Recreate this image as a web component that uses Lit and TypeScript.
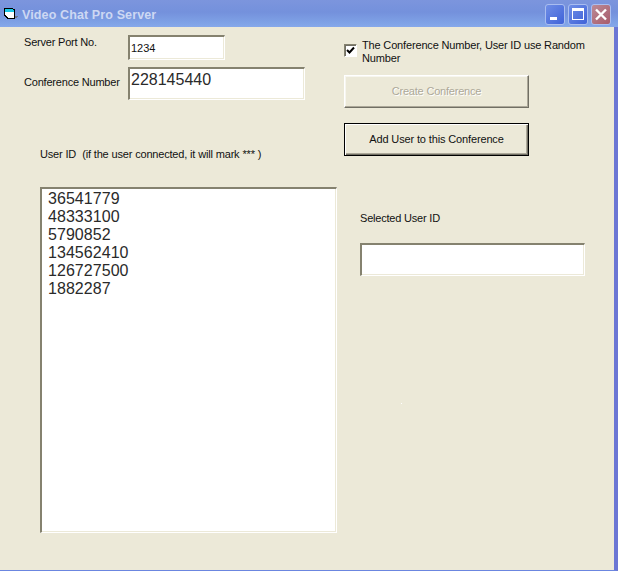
import { LitElement, html, css } from "lit";
import { customElement } from "lit/decorators.js";

@customElement("app-root")
export class AppRoot extends LitElement {
  static styles = css`
    :host {
      display: block;
      width: 618px;
      height: 571px;
      overflow: hidden;
      font-family: "Liberation Sans", Arial, sans-serif;
      font-size: 11px;
      letter-spacing: -0.2px;
      color: #111;
    }
    .window {
      box-sizing: border-box;
      width: 618px;
      height: 571px;
      display: flex;
      flex-direction: column;
      background: #ece9d8;
      border-right: 4px solid #6b76d4;
      border-bottom: 1px solid #6b86e0;
    }
    .titlebar {
      box-sizing: border-box;
      height: 27px;
      margin-right: -4px;
      flex: none;
      display: flex;
      align-items: center;
      padding: 0 4px 0 4px;
      background: linear-gradient(180deg, #7c95dd 0%, #7491dc 45%, #7fa2e6 85%, #86a8ea 100%);
    }
    .app-icon { width: 16px; height: 16px; flex: none; margin: 1px 2px 0 0; }
    .title {
      font-weight: bold;
      font-size: 12.5px;
      letter-spacing: 0.12px;
      color: #cdd8f3;
      flex: 1;
      padding-top: 2px;
    }
    .caps { display: flex; gap: 3px; margin-right: 3px; margin-top: 1px; }
    .cap {
      box-sizing: border-box;
      width: 20px;
      height: 21px;
      border: 1px solid #a9bdf0;
      border-radius: 3px;
      background: linear-gradient(135deg, #6f8ee6, #3f62d8);
      display: block;
    }
    .cap.close { background: linear-gradient(135deg, #bb8a96, #a85c6c); }
    .cap svg { display: block; width: 18px; height: 19px; }
    .form { flex: 1; display: flex; min-height: 0; position: relative; }
    .speck {
      position: absolute;
      left: 401px;
      top: 376px;
      width: 1px;
      height: 1px;
      background: #fff;
    }
    .left { width: 344px; flex: none; box-sizing: border-box; padding-top: 8px; }
    .right { flex: 1; padding-top: 12px; }
    .row { display: flex; }
    .row-port { padding-left: 24px; height: 25px; }
    .row-port .lbl { width: 104px; padding-top: 1px; line-height: 13px; }
    .row-conf { padding-left: 24px; margin-top: 7px; height: 33px; }
    .row-conf .lbl { width: 104px; padding-top: 9px; line-height: 13px; }
    .sunken {
      box-sizing: border-box;
      background: #fff;
      border: solid;
      border-width: 2px 1px 1px 2px;
      border-color: #85826f #fff #fff #85826f;
      box-shadow: inset -1px -1px 0 #ece9d8;
      letter-spacing: 0;
    }
    .port { width: 97px; height: 25px; padding: 4px 1px; font-size: 11px; line-height: 14px; }
    .conf { width: 177px; height: 33px; padding: 2px 1px; font-size: 16px; line-height: 18px; color: #2a2a2a; }
    .uid-label { margin: 48px 0 0 40px; line-height: 13px; height: 13px; white-space: pre; word-spacing: 0.2px; }
    .list {
      width: 297px;
      height: 346px;
      margin: 26px 0 0 40px;
      padding: 1px 6px;
      font-size: 16px;
      line-height: 18px;
      letter-spacing: 0.05px;
      color: #2a2a2a;
    }
    .check {
      display: flex;
      height: 25px;
    }
    .box {
      box-sizing: border-box;
      width: 13px;
      height: 13px;
      flex: none;
      margin: 5px 5px 0 0;
      background: #fff;
      border: 1px solid;
      border-color: #85826f #fff #fff #85826f;
      box-shadow: inset 1px 1px 0 #716f64;
    }
    .box svg { display: block; width: 11px; height: 11px; }
    .check-text { width: 235px; line-height: 13px; letter-spacing: -0.16px; }
    .btn {
      box-sizing: border-box;
      display: flex;
      align-items: center;
      justify-content: center;
      width: 185px;
      height: 33px;
      background: #ece9d8;
      padding: 0 0 2px 0;
    }
    .btn.disabled {
      margin-top: 11px;
      color: #aca899;
      text-shadow: 1px 1px 0 #fff;
      border: 1px solid;
      border-color: #fff #716f64 #716f64 #fff;
      box-shadow: inset -1px -1px 0 #aca899, inset 1px 1px 0 #f7f6ef;
    }
    .btn.default {
      margin-top: 15px;
      letter-spacing: -0.14px;
      border: 1px solid #000;
      box-shadow: inset 1px 1px 0 #fff, inset -1px -1px 0 #716f64, inset -2px -2px 0 #aca899;
    }
    .sel-label { margin: 56px 0 0 16px; line-height: 13px; }
    .sel { width: 225px; height: 33px; margin: 18px 0 0 16px; }
  `;

  render() {
    const ids = ["36541779", "48333100", "5790852", "134562410", "126727500", "1882287"];
    return html`
      <div class="window">
        <div class="titlebar">
          <svg class="app-icon" viewBox="0 0 16 16" shape-rendering="crispEdges">
            <path d="M0 2h9v1h2v10H3v-1H2v-1H1v-1H0z" fill="#000"/>
            <path d="M1 6h9v6H4v-1H3v-1H2V9H1z" fill="#fff"/>
            <path d="M1 3h8v1h1v2H1z" fill="#19c8e6"/>
            <path d="M11 10h3v1h-1v1h-2z" fill="#6d7487"/>
          </svg>
          <span class="title">Video Chat Pro Server</span>
          <div class="caps">
            <span class="cap"><svg viewBox="0 0 18 19"><rect x="4" y="12" width="7" height="3" fill="#fff"/></svg></span>
            <span class="cap"><svg viewBox="0 0 18 19"><path d="M3 3h12v12H3z M4 6v8h10V6z" fill="#fff" fill-rule="evenodd"/></svg></span>
            <span class="cap close"><svg viewBox="0 0 18 19"><path d="M4 4.5 L14 14.5 M14 4.5 L4 14.5" stroke="#fff" stroke-width="2.4" fill="none"/></svg></span>
          </div>
        </div>
        <div class="form">
          <div class="left">
            <div class="row row-port">
              <div class="lbl">Server Port No.</div>
              <div class="sunken port">1234</div>
            </div>
            <div class="row row-conf">
              <div class="lbl">Conference Number</div>
              <div class="sunken conf">228145440</div>
            </div>
            <div class="uid-label">User ID  (if the user connected, it will mark *** )</div>
            <div class="sunken list">${ids.map((id) => html`<div>${id}</div>`)}</div>
          </div>
          <div class="right">
            <div class="check">
              <div class="box"><svg viewBox="0 0 11 11"><path d="M2 5 L4.5 7.5 L9 2.5" stroke="#000" stroke-width="2" fill="none"/></svg></div>
              <div class="check-text">The Conference Number, User ID use Random Number</div>
            </div>
            <div class="btn disabled">Create Conference</div>
            <div class="btn default">Add User to this Conference</div>
            <div class="sel-label">Selected User ID</div>
            <div class="sunken sel"></div>
          </div>
          <div class="speck"></div>
        </div>
      </div>
    `;
  }
}
